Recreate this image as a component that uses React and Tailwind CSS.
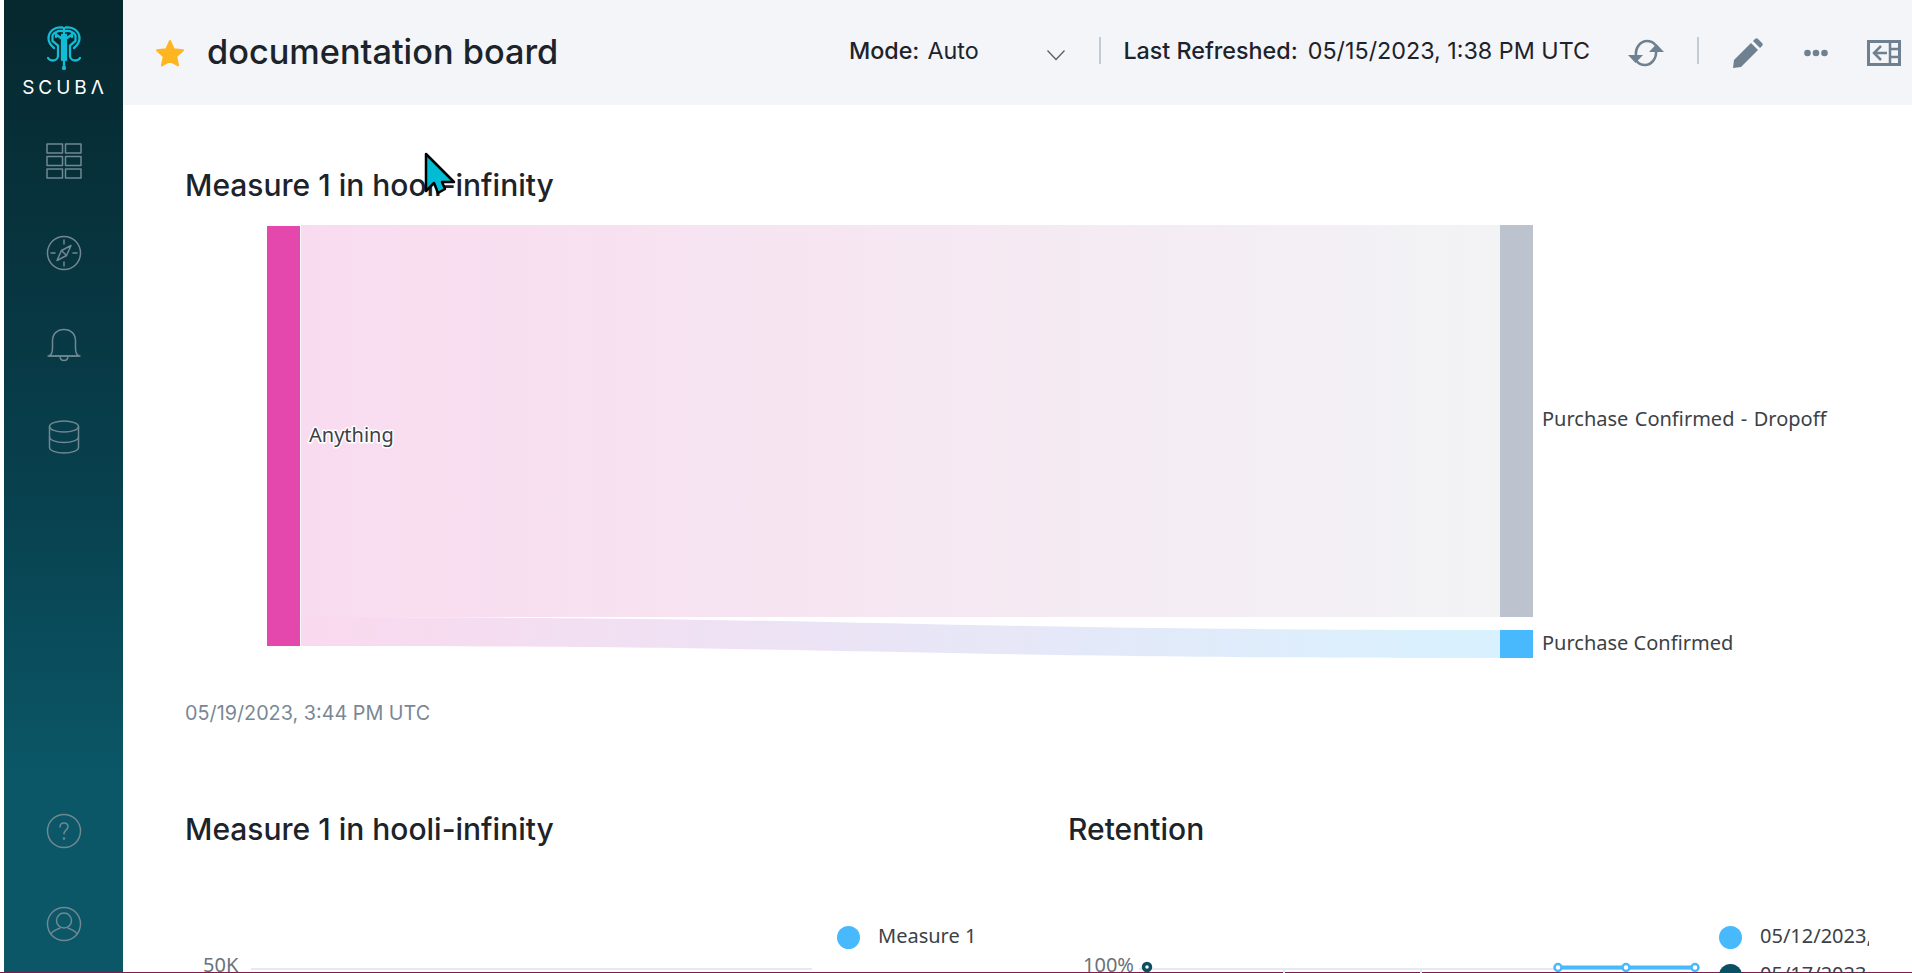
import React from 'react';

const inter = "font-['Inter',sans-serif]";
const noto = "font-['Noto_Sans',sans-serif]";

function LogoHalf() {
  return (
    <>
      <path d="M15 1.500C8 .5 1.500 5 1.500 12.500c0 4.500 2.500 7 5.500 9.500" />
      <path d="M15 5C11 4.500 6.500 6.500 5.500 9.500v5.500l5.500 4.500v3" />
      <path d="M15 9v4l-4.500-3.500M9 8v3M15 15v19" />
      <path d="M11 23v7c0 3-3 4.500-5.500 4.500-1.800 0-3.500-.8-4.500-2.500" />
    </>
  );
}

function Logo() {
  return (
    <svg width="34" height="44" viewBox="0 0 34 44" fill="none" stroke="#12bcd4" strokeWidth="2.300" strokeLinecap="round">
      <LogoHalf />
      <g transform="matrix(-1 0 0 1 34 0)">
        <LogoHalf />
      </g>
      <path d="M17 2v40" />
      <circle cx="17" cy="42" r="1" fill="#12bcd4" />
    </svg>
  );
}

function NavIcon({ children, vb = '0 0 36 36' }) {
  return (
    <svg width="36" height="36" viewBox={vb} fill="none" stroke="#6f8892" strokeWidth="1.500" strokeLinecap="round" strokeLinejoin="round">
      {children}
    </svg>
  );
}

function Sidebar() {
  return (
    <aside className="ml-1 flex w-[119px] shrink-0 flex-col items-center bg-gradient-to-b from-[#06282f] via-[#08404e] via-50% to-[#0b5767] to-80%">
      <div className="mt-[26px] flex flex-col items-center">
        <Logo />
        <div className={`mt-[6px] ml-[3px] text-[19px] leading-[24px] font-normal tracking-[4px] text-white ${inter}`}>SCUBΛ</div>
      </div>
      <nav className="mt-[43px] flex flex-col items-center gap-[56px]">
        <NavIcon>
          <rect x="1" y="1" width="15.500" height="9" />
          <rect x="19.500" y="1" width="15.500" height="9" />
          <rect x="1" y="13.500" width="15.500" height="9" />
          <rect x="19.500" y="13.500" width="15.500" height="9" />
          <rect x="1" y="26" width="15.500" height="9" />
          <rect x="19.500" y="26" width="15.500" height="9" />
        </NavIcon>
        <NavIcon>
          <circle cx="18" cy="18" r="16.500" />
          <path d="M18 5v4M18 27v4M5 18h4M27 18h4" />
          <path d="M25 10.500l-9.500 5L11 25.500l9.500-5z" />
          <path d="M15.500 15.500l5 5" />
        </NavIcon>
        <NavIcon>
          <path d="M3 29c3-1.500 3.500-4 3.500-8v-7C6.500 7 11 2.500 18 2.500S29.500 7 29.500 14v7c0 4 .5 6.500 3.500 8z" />
          <path d="M2 29h32M14 29c0 3 1.500 4.500 4 4.500s4-1.500 4-4.500" />
        </NavIcon>
        <NavIcon>
          <ellipse cx="18" cy="7.500" rx="14.500" ry="5.500" />
          <path d="M3.500 7.500v21c0 3 6.500 5.500 14.500 5.500s14.500-2.500 14.500-5.500v-21" />
          <path d="M3.500 18c0 3 6.500 5.500 14.500 5.500S32.500 21 32.500 18" />
        </NavIcon>
      </nav>
      <div className="mt-auto mb-[30px] flex flex-col items-center gap-[57px]">
        <NavIcon>
          <circle cx="18" cy="18" r="16.500" />
          <path d="M14 14c0-2.500 1.800-4 4-4s4 1.500 4 3.800c0 3.200-4 3.500-4 7" />
          <circle cx="18" cy="25.500" r=".6" />
        </NavIcon>
        <NavIcon>
          <circle cx="18" cy="18" r="16.500" />
          <circle cx="18" cy="14.500" r="7.500" />
          <path d="M5 28c2-3.500 6-4.500 9-6M31 28c-2-3.500-6-4.500-9-6" />
        </NavIcon>
      </div>
    </aside>
  );
}

function Header() {
  return (
    <header className={`flex h-[105px] shrink-0 items-center bg-[#f3f5f9] pr-[11px] pl-[32px] text-[#1d232b] ${inter}`}>
      <svg width="30" height="28" viewBox="0 0 30 28" fill="#fdb622" stroke="#fdb622" strokeWidth="2" strokeLinejoin="round">
        <path d="M15 2l3.800 8.300 9.200 1-6.800 6.200 1.900 8.900L15 21.900l-8.100 4.500 1.900-8.900L2 11.300l9.200-1z" />
      </svg>
      <h1 className="mb-[2px] ml-[22px] text-[34.300px] leading-[42px] font-medium">documentation board</h1>
      <div className="ml-auto flex items-center text-[23.300px]">
        <span className="pb-[3px] font-medium">Mode:</span>
        <span className="ml-2 w-[119px] pb-[3px] font-normal">Auto</span>
        <svg width="20" height="12" viewBox="0 0 20 12" fill="none" stroke="#56616d" strokeWidth="1.300" className="mt-[4px]">
          <path d="M1.500 1.500L10 10.500l8.500-9" />
        </svg>
        <div className="mr-[22px] mb-[4px] ml-[33px] h-[27px] w-[2px] bg-[#c3cbd4]" />
        <span className="pb-[3px] font-medium">Last Refreshed:</span>
        <span className="ml-[10px] pb-[3px] font-normal">05/15/2023, 1:38 PM UTC</span>
        <svg width="36" height="28" viewBox="0 0 36 28" fill="none" className="ml-[38px]">
          <path d="M8 17C7 8 13 2 19 2c3 0 6 1 8 3.500M28 11c1 9-5 15-11 15-3 0-6-1-8-3.500" stroke="#6f8090" strokeWidth="2.600" strokeLinecap="round" />
          <path d="M0 16h15l-7.500 8zM21 13l7.500-8 7.500 8z" fill="#6f8090" />
        </svg>
        <div className="mr-[34px] mb-[4px] ml-[33px] h-[27px] w-[2px] bg-[#c3cbd4]" />
        <svg width="30" height="30" viewBox="0 0 30 30" fill="#6f8090">
          <path d="M0 30l1-8L18 5l7 7L8 29z" />
          <path d="M20 3l2-2c1-1 2-1 3 0l4 4c1 1 1 2 0 3l-2 2z" />
        </svg>
        <svg width="24" height="8" viewBox="0 0 24 8" fill="#6f8090" className="ml-[41px]">
          <circle cx="3.500" cy="4" r="3.300" />
          <circle cx="12" cy="4" r="3.300" />
          <circle cx="20.500" cy="4" r="3.300" />
        </svg>
        <svg width="34" height="26" viewBox="0 0 34 26" fill="none" stroke="#6f8090" className="ml-[39px]">
          <rect x="1.500" y="1.500" width="31" height="23" strokeWidth="3" />
          <path d="M23 3v20M23 9h9M23 17h9" strokeWidth="2.500" />
          <path d="M20 13H8M14 6l-7 7 7 7" strokeWidth="2.500" />
        </svg>
      </div>
    </header>
  );
}

function Sankey() {
  return (
    <svg width="1727" height="450" viewBox="-1 0 1727 450" className="block" fill="none">
      <defs>
        <linearGradient id="flowGray" x1="0" x2="1" y1="0" y2="0">
          <stop offset="0" stopColor="#f9dbef" />
          <stop offset="1" stopColor="#f2f3f5" />
        </linearGradient>
        <linearGradient id="flowBlue" x1="0" x2="1" y1="0" y2="0">
          <stop offset="0" stopColor="#fad9ee" />
          <stop offset="1" stopColor="#d8f1fe" />
        </linearGradient>
      </defs>
      <path d="M115 5H1314V397H115z" fill="url(#flowGray)" />
      <path d="M115 397C700 397 730 410 1314 410V438C730 438 700 426 115 426z" fill="url(#flowBlue)" />
      <rect x="81" y="6" width="33" height="420" fill="#e448ad" />
      <rect x="1314" y="5" width="33" height="392" fill="#bcc3cf" />
      <rect x="1314" y="410" width="33" height="28" fill="#48b9fd" />
      <g className={`text-[20px] ${noto}`} fill="#3c4148" dominantBaseline="central">
        <text x="123" y="214" stroke="#ffffff" strokeWidth="3" strokeLinejoin="round" className="[paint-order:stroke]">Anything</text>
        <text x="1356" y="198" className="[word-spacing:1.200px]">Purchase Confirmed - Dropoff</text>
        <text x="1356" y="422">Purchase Confirmed</text>
      </g>
    </svg>
  );
}

function Legend({ color, label }) {
  return (
    <div className="flex items-center">
      <span className="mt-[2px] h-[23px] w-[23px] shrink-0 rounded-full" style={{ background: color }} />
      <span className={`ml-[18px] text-[20px] leading-[28px] whitespace-nowrap text-[#3c4148] ${noto}`}>{label}</span>
    </div>
  );
}

function MeasureChart() {
  return (
    <div className="flex h-[60px]">
      <svg width="652" height="60" viewBox="-1 0 652 60" className="block shrink-0" fill="none">
        <text x="17" y="39" fill="#6b7278" className={`text-[20px] ${noto}`} dominantBaseline="central">50K</text>
        <path d="M65 44H626" stroke="#e6e8f2" strokeWidth="2" />
      </svg>
      <div className="mt-[-3px]">
        <Legend color="#48b9fd" label="Measure 1" />
      </div>
    </div>
  );
}

function RetentionChart() {
  const points = [489, 557, 626];
  return (
    <div className="flex h-[60px]">
      <svg width="651" height="60" viewBox="-1 0 651 60" className="block shrink-0" fill="none">
        <text x="14" y="39" fill="#6b7278" className={`text-[20px] ${noto}`} dominantBaseline="central">100%</text>
        <path d="M70 44H626M215 44V60M352 44V60" stroke="#e6e8f2" strokeWidth="2" />
        <circle cx="78" cy="42" r="3.500" fill="#ffffff" stroke="#0b4f63" strokeWidth="3.500" />
        <path d="M489 42.500H626" stroke="#48b9fd" strokeWidth="4" />
        {points.map(x => (
          <circle key={x} cx={x} cy="42.500" r="3.500" fill="#ffffff" stroke="#48b9fd" strokeWidth="2.500" />
        ))}
      </svg>
      <div className="mt-[-3px] flex w-[150px] flex-col gap-[10px] overflow-hidden">
        <Legend color="#48b9fd" label="05/12/2023," />
        <Legend color="#0b4f63" label="05/17/2023," />
      </div>
    </div>
  );
}

function Title({ children }) {
  return <h2 className={`text-[30px] leading-[36px] font-medium text-[#1d232b] ${inter}`}>{children}</h2>;
}

export default function App() {
  return (
    <div className="flex h-[973px] w-[1912px] flex-col overflow-hidden bg-white">
      <div className="flex min-h-0 flex-1">
        <Sidebar />
        <main className="flex min-w-0 flex-1 flex-col">
          <Header />
          <div className="relative pt-[62px] pl-[62px]">
            <Title>Measure 1 in hooli-infinity</Title>
            <div className="mt-[17px]">
              <Sankey />
            </div>
            <p className={`mt-[29px] text-[19.800px] leading-[28px] text-[#7a8794] ${inter}`}>05/19/2023, 3:44 PM UTC</p>
            <div className="mt-[84px] grid grid-cols-[883px_1fr]">
              <section>
                <Title>Measure 1 in hooli-infinity</Title>
                <div className="mt-[78px]">
                  <MeasureChart />
                </div>
              </section>
              <section>
                <Title>Retention</Title>
                <div className="mt-[78px]">
                  <RetentionChart />
                </div>
              </section>
            </div>
            <svg width="32" height="44" viewBox="0 0 32 44" className="absolute top-[47px] left-[301px]">
              <path d="M2 2L30 30H18L21 37L14 41L10 31L2 39z" fill="#00bcd4" stroke="#000000" strokeWidth="2.500" strokeLinejoin="round" />
            </svg>
          </div>
        </main>
      </div>
      <div className="h-px shrink-0 bg-[#7d1d4d]" />
    </div>
  );
}
